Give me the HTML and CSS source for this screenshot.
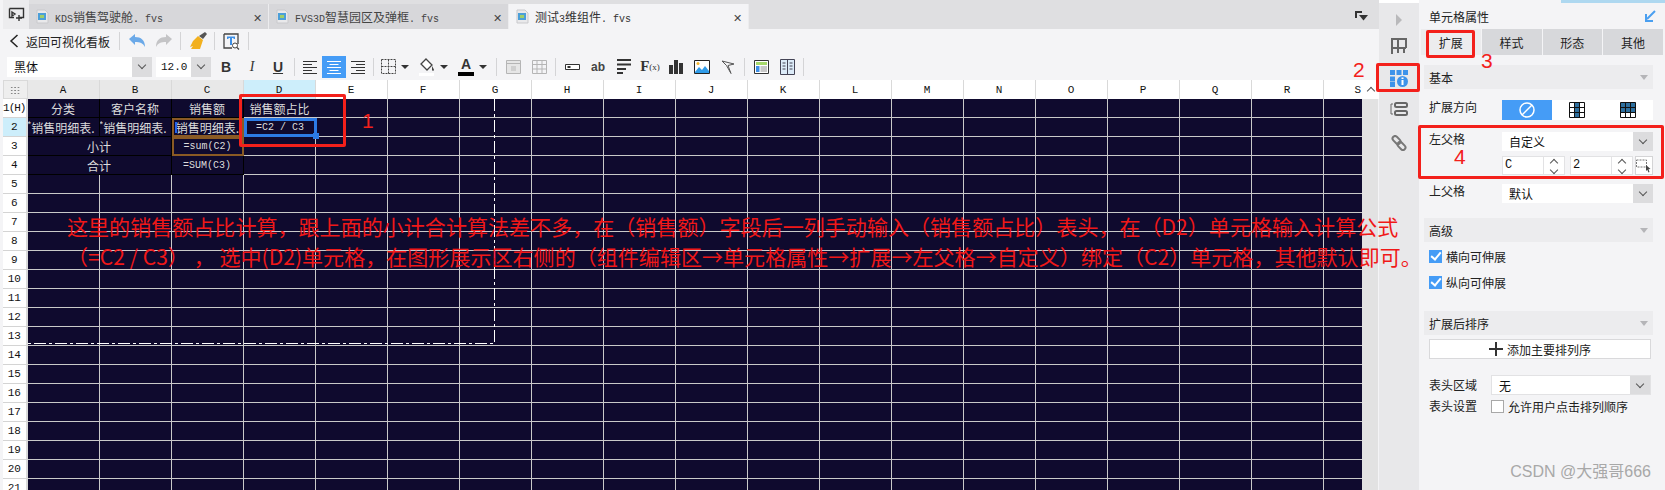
FILE: index.html
```html
<!DOCTYPE html>
<html lang="zh-CN">
  <head>
    <meta charset="UTF-8" />
    <title>测试3维组件.fvs</title>
    <link rel="stylesheet" href="styles.css">
  </head>
  <body>
    <div class="app">
      <div class="main">
        <div class="tabbar">
          <div class="tab-home">
            <svg width="17" height="15" viewBox="0 0 17 15"><path d="M1.5 1.5h14v9h-4M6 10.5H1.5v-9" fill="none" stroke="#333" stroke-width="1.4"/><path d="M4 5l3 2-3 2zM11 8v6M8 11h6" fill="none" stroke="#333" stroke-width="1.4"/></svg>
          </div>
          <div class="tab">
            <svg class="file-icon" width="13" height="15" viewBox="0 0 13 15"><path d="M1 1h8l3 3v10H1z" fill="#e9e9eb" stroke="#c9c9cc"/><rect x="2" y="4" width="8" height="7" fill="#4b9fd8"/><rect x="4" y="6" width="4" height="3" fill="#9fce6a"/></svg>
            <span class="tab-name"><span class="lat">KDS</span>销售驾驶舱<span class="lat">. fvs</span></span>
            <span class="tab-close">✕</span>
          </div>
          <div class="tab">
            <svg class="file-icon" width="13" height="15" viewBox="0 0 13 15"><path d="M1 1h8l3 3v10H1z" fill="#e9e9eb" stroke="#c9c9cc"/><rect x="2" y="4" width="8" height="7" fill="#4b9fd8"/><rect x="4" y="6" width="4" height="3" fill="#9fce6a"/></svg>
            <span class="tab-name"><span class="lat">FVS3D</span>智慧园区及弹框<span class="lat">. fvs</span></span>
            <span class="tab-close">✕</span>
          </div>
          <div class="tab active">
            <svg class="file-icon" width="13" height="15" viewBox="0 0 13 15"><path d="M1 1h8l3 3v10H1z" fill="#e9e9eb" stroke="#c9c9cc"/><rect x="2" y="4" width="8" height="7" fill="#4b9fd8"/><rect x="4" y="6" width="4" height="3" fill="#9fce6a"/></svg>
            <span class="tab-name">测试<span class="lat">3</span>维组件<span class="lat">. fvs</span></span>
            <span class="tab-close">✕</span>
          </div>
          <div class="tab-menu">
            <svg width="14" height="10" viewBox="0 0 14 10"><path d="M0 0h7v2H2v5H0z" fill="#333"/><path d="M4 4h9L8.500 9.500z" fill="#333"/></svg>
          </div>
        </div>

        <div class="toolbar toolbar-top">
          <svg class="back-icon" width="10" height="14" viewBox="0 0 10 14"><path d="M8.500 1L2 7l6.500 6" fill="none" stroke="#222" stroke-width="1.500"/></svg>
          <span class="back-text">返回可视化看板</span>
          <span class="sep"></span>
          <span class="tool">
            <svg width="18" height="16" viewBox="0 0 18 16"><path d="M1 6l6-5v3c6 0 10 3 10 10-2-4-5-5-10-5v3z" fill="#6ba9e8"/></svg>
          </span>
          <span class="tool">
            <svg width="18" height="16" viewBox="0 0 18 16"><path d="M17 6l-6-5v3C5 4 1 7 1 14c2-4 5-5 10-5v3z" fill="#c4c4c6"/></svg>
          </span>
          <span class="sep"></span>
          <span class="tool">
            <svg width="18" height="18" viewBox="0 0 18 18"><path d="M9 4l5 4-3 9H2l2-3-3 1 3-6z" fill="#f2b01e"/><path d="M10 4l6-4 2 2-4 5z" fill="#555"/></svg>
          </span>
          <span class="sep"></span>
          <span class="tool">
            <svg width="17" height="17" viewBox="0 0 17 17"><path d="M1 1h14v10M9 15H1V1" fill="none" stroke="#444" stroke-width="1.300"/><path d="M4 3.500h8v2.500h-1.500v-1H9v7H7V5H5.500v1H4z" fill="#3d8fe6"/><circle cx="12" cy="12.500" r="2.500" fill="#fff" stroke="#444"/><path d="M14 14.500l2 2" stroke="#444" stroke-width="1.300"/></svg>
          </span>
          <span class="sep"></span>
        </div>

        <div class="toolbar toolbar-format">
          <div class="select select-font"><span class="select-value">黑体</span><span class="select-arrow"><i class="chevron"></i></span></div>
          <div class="select select-size"><span class="select-value mono">12.0</span><span class="select-arrow"><i class="chevron"></i></span></div>
          <span class="tool letter bold">B</span>
          <span class="tool letter italic">I</span>
          <span class="tool letter under">U</span>
          <span class="sep"></span>
          <span class="tool align">
            <svg width="14" height="14" viewBox="0 0 14 14"><path d="M0 1.500h14M0 4.500h9M0 7.500h14M0 10.500h9M0 13.500h14" stroke="#333"/></svg>
          </span>
          <span class="tool align on">
            <svg width="14" height="14" viewBox="0 0 14 14"><path d="M0 1.500h14M2.500 4.500h9M0 7.500h14M2.500 10.500h9M0 13.500h14" stroke="#fff"/></svg>
          </span>
          <span class="tool align">
            <svg width="14" height="14" viewBox="0 0 14 14"><path d="M0 1.500h14M5 4.500h9M0 7.500h14M5 10.500h9M0 13.500h14" stroke="#333"/></svg>
          </span>
          <span class="sep"></span>
          <span class="tool short">
            <svg width="15" height="15" viewBox="0 0 15 15"><path d="M.5.500h14v14H.5zM7.500.500v14M.5 7.500h14" fill="none" stroke="#444" stroke-dasharray="2 1"/></svg>
          </span>
          <span class="caret"></span>
          <span class="tool short gap-left">
            <svg width="16" height="18" viewBox="0 0 16 18"><path d="M7 1l6 6-5 5-6-6z" fill="#fff" stroke="#444" stroke-width="1.300"/><path d="M13 8c1 2 2 3 2 4s-2 1-2 0 0-2 0-4z" fill="#444"/><rect y="15" width="15" height="3" fill="#fff"/></svg>
          </span>
          <span class="caret"></span>
          <span class="tool short gap-left">
            <svg width="16" height="18" viewBox="0 0 16 18"><rect y="14" width="16" height="4" fill="#000"/></svg>
            <b class="font-a">A</b>
          </span>
          <span class="caret"></span>
          <span class="sep sep-wide"></span>
          <span class="tool">
            <svg width="15" height="14" viewBox="0 0 15 14"><path d="M.5.500h14v13H.5zM.5 3.500h14" fill="#e6e6e6" stroke="#b5b5b5"/><rect x="5" y="6" width="5" height="5" fill="#cfcfcf"/></svg>
          </span>
          <span class="tool">
            <svg width="15" height="14" viewBox="0 0 15 14"><path d="M.5.500h14v13H.5zM.5 4.500h14M.5 9h14M5 .5v13M10 .5v13" fill="none" stroke="#b5b5b5"/></svg>
          </span>
          <span class="sep"></span>
          <span class="tool">
            <svg width="15" height="6" viewBox="0 0 15 6"><path d="M.5.500h14v5H.5z" fill="#fff" stroke="#333"/><rect x="2.500" y="2" width="3" height="2" fill="#333"/></svg>
          </span>
          <span class="tool ab">ab</span>
          <span class="tool">
            <svg width="14" height="15" viewBox="0 0 14 15"><path d="M0 1h14M0 5.500h14M0 10h9M0 14h6" stroke="#333" stroke-width="2"/></svg>
          </span>
          <span class="tool fx">F<small>(x)</small></span>
          <span class="tool">
            <svg width="14" height="14" viewBox="0 0 14 14"><path d="M0 5h4v9H0zM5 0h4v14H5zM10 3h4v11h-4z" fill="#333"/></svg>
          </span>
          <span class="tool">
            <svg width="16" height="14" viewBox="0 0 16 14"><path d="M.5.500h15v13H.5z" fill="#fff" stroke="#222"/><path d="M1 12l4-5 3 3 3-4 4 5v2H1z" fill="#2f9be8"/><circle cx="4" cy="3.500" r="1.500" fill="#f5b62f"/></svg>
          </span>
          <span class="tool">
            <svg width="14" height="14" viewBox="0 0 14 14"><path d="M1 1l12 3-6 1.500 3 8L5.500 5.500z" fill="none" stroke="#555"/></svg>
          </span>
          <span class="sep"></span>
          <span class="tool">
            <svg width="15" height="14" viewBox="0 0 15 14"><path d="M.5.500h14v13H.5z" fill="#fff" stroke="#333"/><rect x="2" y="2" width="11" height="3" fill="#a6d86a"/><rect x="2" y="6" width="3.500" height="6" fill="#3d8fe6"/><rect x="6.500" y="6" width="6.500" height="6" fill="#c8c8c8"/></svg>
          </span>
          <span class="tool">
            <svg width="15" height="16" viewBox="0 0 15 16"><path d="M.5.500h14v15H.5z" fill="#dcebf8" stroke="#445"/><path d="M7.500.5v15M2.500 4h3M2.500 7h3M2.500 10h3M9.500 4h3M9.500 7h3M9.500 10h3" stroke="#445"/></svg>
          </span>
          <span class="sep"></span>
        </div>

        <div class="sheet">
          <div class="col-heads">
            <span class="corner"><i class="dots"></i></span>
            <span class="col-head used">A</span>
            <span class="col-head used">B</span>
            <span class="col-head used">C</span>
            <span class="col-head current">D</span>
            <span class="col-head">E</span>
            <span class="col-head">F</span>
            <span class="col-head">G</span>
            <span class="col-head">H</span>
            <span class="col-head">I</span>
            <span class="col-head">J</span>
            <span class="col-head">K</span>
            <span class="col-head">L</span>
            <span class="col-head">M</span>
            <span class="col-head">N</span>
            <span class="col-head">O</span>
            <span class="col-head">P</span>
            <span class="col-head">Q</span>
            <span class="col-head">R</span>
            <span class="col-head last">S</span>
            <span class="scroll-up"><i class="chevron up"></i></span>
          </div>
          <div class="sheet-body">
            <div class="row-heads">
              <span class="row-head head-h">1(H)</span>
              <span class="row-head current">2</span>
              <span class="row-head">3</span>
              <span class="row-head">4</span>
              <span class="row-head">5</span>
              <span class="row-head">6</span>
              <span class="row-head">7</span>
              <span class="row-head">8</span>
              <span class="row-head">9</span>
              <span class="row-head">10</span>
              <span class="row-head">11</span>
              <span class="row-head">12</span>
              <span class="row-head">13</span>
              <span class="row-head">14</span>
              <span class="row-head">15</span>
              <span class="row-head">16</span>
              <span class="row-head">17</span>
              <span class="row-head">18</span>
              <span class="row-head">19</span>
              <span class="row-head">20</span>
              <span class="row-head">21</span>
            </div>
            <div class="cells">
              <div class="cell filled">分类</div>
              <div class="cell filled">客户名称</div>
              <div class="cell filled">销售额</div>
              <div class="cell head-d">销售额占比</div>
              <div class="cell filled"><i class="star">*</i>销售明细表.</div>
              <div class="cell filled"><i class="star">*</i>销售明细表.</div>
              <div class="cell filled brown"><i class="down-mark"></i>销售明细表.</div>
              <div class="cell selected formula">=C2 / C3<i class="handle"></i></div>
              <div class="cell filled span-2">小计</div>
              <div class="cell filled brown formula">=sum(C2)</div>
              <div class="cell"></div>
              <div class="cell filled span-2">合计</div>
              <div class="cell filled formula">=SUM(C3)</div>
            </div>
            <svg class="page-break" width="468" height="245" viewBox="0 0 468 245"><path d="M466.500 0v244.500H0" fill="none" stroke="#fff" stroke-dasharray="12 3 3 3"/></svg>
          </div>
          <div class="scrollbar"></div>
        </div>
      </div>

      <div class="sidebar">
        <svg class="side-icon first" width="8" height="12" viewBox="0 0 8 12"><path d="M1 0l6 6-6 6z" fill="#b9b9bb"/></svg>
        <svg class="side-icon" width="18" height="17" viewBox="0 0 18 17"><path d="M1 1h16M2 1v15M2 10h14M8 1v9M16 1v9M8 10v5M14 10v5" fill="none" stroke="#666" stroke-width="2"/></svg>
        <svg class="side-icon" width="18" height="17" viewBox="0 0 18 17"><path d="M0 0h5v5H0zM6.500 0h5v5h-5zM13 0h5v5h-5zM0 6.500h5v5H0zM0 12h5v5H0z" fill="#3d93ea"/><circle cx="12.500" cy="11.500" r="5.500" fill="#3d93ea"/><path d="M11.500 10h2v5h-2zM11.500 7.500h2v1.500h-2z" fill="#fff"/></svg>
        <svg class="side-icon tall-gap" width="18" height="14" viewBox="0 0 18 14"><path d="M3 2H1v10h2" fill="none" stroke="#666"/><rect x="5" y="1" width="12" height="4" rx="1.500" fill="none" stroke="#666" stroke-width="2"/><rect x="5" y="9" width="12" height="4" rx="1.500" fill="none" stroke="#666" stroke-width="2"/></svg>
        <svg class="side-icon" width="16" height="16" viewBox="0 0 16 16"><rect x="1" y="2.500" width="9" height="5" rx="2.500" transform="rotate(45 5.500 5)" fill="none" stroke="#777" stroke-width="2"/><rect x="6" y="8.500" width="9" height="5" rx="2.500" transform="rotate(45 10.500 11)" fill="none" stroke="#777" stroke-width="2"/></svg>
      </div>

      <div class="panel">
        <div class="panel-title">
          <span>单元格属性</span>
          <svg width="12" height="12" viewBox="0 0 12 12"><path d="M11 1L3 9M2 4v7h7" fill="none" stroke="#4a9ff0" stroke-width="2"/></svg>
        </div>
        <div class="panel-tabs">
          <span class="panel-tab active">扩展</span>
          <span class="panel-tab">样式</span>
          <span class="panel-tab">形态</span>
          <span class="panel-tab">其他</span>
        </div>

        <div class="section">基本<i class="section-arrow"></i></div>
        <div class="form-row dir-row">
          <label class="form-label">扩展方向</label>
          <div class="dir-group">
            <span class="dir on">
              <svg width="16" height="16" viewBox="0 0 16 16"><circle cx="8" cy="8" r="7" fill="none" stroke="#fff" stroke-width="1.500"/><path d="M3 13L13 3" stroke="#fff" stroke-width="1.500"/></svg>
            </span>
            <span class="dir">
              <svg width="16" height="16" viewBox="0 0 16 16"><rect x="5.500" y=".5" width="5" height="15" fill="#2d6f9e"/><path d="M.5.500h15v15H.5zM5.500.5v15M10.500.5v15M.5 5.500h15M.5 10.500h15" fill="none" stroke="#111"/></svg>
            </span>
            <span class="dir">
              <svg width="16" height="16" viewBox="0 0 16 16"><rect x=".5" y="5.500" width="15" height="5" fill="#2d6f9e"/><rect x=".5" y=".5" width="15" height="5" fill="#2d6f9e"/><path d="M.5.500h15v15H.5zM5.500.5v15M10.500.5v15M.5 5.500h15M.5 10.500h15" fill="none" stroke="#111"/></svg>
            </span>
          </div>
        </div>
        <div class="form-row parent-row">
          <label class="form-label">左父格</label>
          <div class="parent-fields">
            <div class="select select-panel"><span class="select-value">自定义</span><span class="select-arrow"><i class="chevron"></i></span></div>
            <div class="spin-row">
              <div class="spin"><span class="spin-value">C</span><span class="spin-btns"><i class="chevron up"></i><i class="chevron"></i></span></div>
              <div class="spin"><span class="spin-value">2</span><span class="spin-btns"><i class="chevron up"></i><i class="chevron"></i></span></div>
              <span class="pick">
                <svg width="16" height="14" viewBox="0 0 16 14"><path d="M.5 1h10v7H.5z" fill="none" stroke="#777" stroke-dasharray="2 1"/><path d="M10 6l4.500 4-2 .3 1 2.700-1 .4-1.200-2.700-1.300 1.300z" fill="#444"/></svg>
              </span>
            </div>
          </div>
        </div>
        <div class="form-row upper-row">
          <label class="form-label">上父格</label>
          <div class="select select-panel"><span class="select-value">默认</span><span class="select-arrow"><i class="chevron"></i></span></div>
        </div>

        <div class="section section-adv">高级<i class="section-arrow"></i></div>
        <div class="check-row first-check"><i class="check on"></i>横向可伸展</div>
        <div class="check-row"><i class="check on"></i>纵向可伸展</div>

        <div class="section section-sort">扩展后排序<i class="section-arrow"></i></div>
        <div class="add-sort"><b class="plus"></b>添加主要排列序</div>
        <div class="form-row header-area">
          <label class="form-label">表头区域</label>
          <div class="select select-header"><span class="select-value">无</span><span class="select-arrow"><i class="chevron"></i></span></div>
        </div>
        <div class="form-row header-set">
          <label class="form-label">表头设置</label>
          <div class="check-inline"><i class="check"></i>允许用户点击排列顺序</div>
        </div>
      </div>
    </div>

    <div class="mark box-1"></div>
    <div class="mark box-2"></div>
    <div class="mark box-3"></div>
    <div class="mark box-4"></div>
    <span class="num num-1">1</span>
    <span class="num num-2">2</span>
    <span class="num num-3">3</span>
    <span class="num num-4">4</span>
    <div class="note">
      <div>这里的销售额占比计算，跟上面的小计合计算法差不多，在（销售额）字段后一列手动输入（销售额占比）表头，在（D2）单元格输入计算公式</div>
      <div class="note-second">（=C2 / C3）&nbsp;，&nbsp;选中(D2)单元格，在图形展示区右侧的（组件编辑区→单元格属性→扩展→左父格→自定义）绑定（C2）单元格，其他默认即可。</div>
    </div>
    <div class="topline"></div>
    <div class="watermark">CSDN @大强哥666</div>
  </body>
</html>
```

FILE: styles.css
```css
* {
  box-sizing: border-box;
}
body {
  margin: 0;
  width: 1665px;
  height: 490px;
  overflow: hidden;
  position: relative;
  font-family: "Noto Sans CJK SC", sans-serif;
  font-size: 12px;
  color: #222;
  background: #fff;
}
i {
  font-style: normal;
}
.app {
  display: flex;
  height: 490px;
}
.main {
  width: 1379px;
  padding-left: 3px;
  display: flex;
  flex-direction: column;
  background: #f4f4f6;
}

/* tabs */
.tabbar {
  display: flex;
  height: 29px;
  padding-top: 4px;
  background: #dfdfe1;
  position: relative;
}
.tab-home {
  width: 26px;
  margin-top: -4px;
  display: flex;
  align-items: center;
  justify-content: center;
  background: #ececee;
}
.tab {
  width: 240px;
  display: flex;
  align-items: center;
  padding: 0 6px 0 7px;
  background: #d7d7da;
  border-right: 1px solid #ececee;
  color: #444;
}
.tab.active {
  background: #f4f4f6;
  color: #333;
}
.file-icon {
  flex: none;
}
.tab-name {
  margin-left: 6px;
  flex: 1;
}
.lat {
  font-family: "Liberation Mono", monospace;
  font-size: 10px;
}
.tab-close {
  font-size: 11px;
  color: #444;
}
.tab-menu {
  margin-left: auto;
  margin-right: 10px;
  margin-top: 3px;
}

/* toolbars */
.toolbar {
  display: flex;
  align-items: center;
}
.toolbar-top {
  height: 24px;
  padding-left: 6px;
}
.toolbar-top .tool {
  width: 27px;
}
.toolbar-format {
  height: 27px;
  padding-left: 4px;
}
.back-icon {
  margin-right: 7px;
}
.back-text {
  width: 90px;
  font-size: 12px;
  color: #222;
}
.sep {
  width: 1px;
  height: 18px;
  margin: 0 3px;
  background: #d4d4d6;
}
.sep-wide {
  margin-left: 7px;
}
.tool {
  width: 26px;
  height: 22px;
  display: flex;
  align-items: center;
  justify-content: center;
  position: relative;
}
.tool.align {
  width: 24px;
}
.tool.short {
  width: 22px;
}
.tool.on {
  background: #459cf6;
}
.gap-left {
  margin-left: 5px;
}
.letter {
  font-family: "Liberation Sans", sans-serif;
  font-size: 14px;
  color: #333;
}
.bold {
  font-weight: bold;
}
.italic {
  font-style: italic;
  font-family: "Liberation Serif", serif;
}
.under {
  font-weight: bold;
  text-decoration: underline;
}
.caret {
  width: 12px;
  display: flex;
  justify-content: center;
}
.caret::after {
  content: "";
  border-left: 4px solid transparent;
  border-right: 4px solid transparent;
  border-top: 4px solid #333;
}
.font-a {
  position: absolute;
  top: 0;
  left: 0;
  right: 0;
  text-align: center;
  font-family: "Liberation Sans", sans-serif;
  font-size: 14px;
  line-height: 16px;
  color: #333;
}
.ab {
  font-family: "Liberation Sans", sans-serif;
  font-size: 12px;
  font-weight: bold;
  color: #444;
}
.fx {
  font-family: "Liberation Serif", serif;
  font-size: 15px;
  font-weight: bold;
  color: #333;
}
.fx small {
  font-size: 9px;
  font-weight: normal;
}

/* selects */
.select {
  display: flex;
  height: 20px;
  background: #fff;
  align-items: stretch;
}
.select-font {
  width: 145px;
}
.select-size {
  width: 55px;
  margin-left: 4px;
  margin-right: 2px;
}
.select-value {
  flex: 1;
  padding-left: 7px;
  line-height: 20px;
  color: #111;
  white-space: nowrap;
}
.mono {
  font-family: "Liberation Mono", monospace;
  font-size: 11px;
  padding-left: 5px;
}
.select-arrow {
  width: 20px;
  display: flex;
  align-items: center;
  justify-content: center;
  background: #dcdcde;
}
.chevron {
  width: 6px;
  height: 6px;
  margin-top: -3px;
  display: block;
  border-right: 1px solid #555;
  border-bottom: 1px solid #555;
  transform: rotate(45deg);
}
.chevron.up {
  margin-top: 3px;
  transform: rotate(225deg);
}

/* sheet */
.sheet {
  flex: 1;
  position: relative;
  overflow: hidden;
  font-family: "Liberation Mono", "Noto Sans CJK SC", monospace;
  font-size: 11px;
}
.col-heads {
  display: flex;
  height: 19px;
  background: #fff;
}
.corner {
  width: 24.5px;
  flex: none;
  display: flex;
  align-items: center;
  justify-content: center;
  background: #eeeeee;
  border: 1px solid #d9d9d9;
}
.dots {
  width: 10px;
  height: 8px;
  background-image: radial-gradient(#888 1px, transparent 1px);
  background-size: 3.400px 3px;
}
.col-head {
  width: 72px;
  flex: none;
  border-right: 1px solid #d9d9d9;
  text-align: center;
  line-height: 20px;
  color: #111;
  background: #fff;
}
.col-head.used {
  background: #e8e8e8;
}
.col-head.current {
  background: #cdeefb;
}
.col-head.last {
  width: 38.500px;
  text-align: right;
  padding-right: 1px;
  border-right: 0;
}
.scroll-up {
  width: 17px;
  flex: none;
  display: flex;
  align-items: center;
  justify-content: center;
  background: #fff;
}
.sheet-body {
  display: flex;
  position: relative;
}
.row-heads {
  width: 24.500px;
  height: 391px;
  overflow: hidden;
  flex: none;
  background: #fff;
}
.row-head {
  display: block;
  height: 19px;
  border-bottom: 1px solid #d4d4d4;
  border-right: 2px solid #d9d9d9;
  text-align: center;
  line-height: 19px;
  color: #111;
}
.row-head.current {
  background: #cdeefb;
}
.head-h {
  letter-spacing: -1px;
}
.cells {
  width: 1334.500px;
  height: 391px;
  display: grid;
  grid-template-columns: repeat(4, 72px);
  grid-auto-rows: 19px;
  background-color: #0f0a2e;
  background-image:
    linear-gradient(to right, transparent 71px, #c9c9c9 71px),
    linear-gradient(to bottom, transparent 18px, #c9c9c9 18px);
  background-size: 72px 19px;
}
.cell {
  display: flex;
  align-items: center;
  justify-content: center;
  position: relative;
  font-family: "Noto Sans CJK SC", sans-serif;
  font-size: 12px;
  color: #dcdcdc;
  white-space: nowrap;
  overflow: hidden;
}
.filled {
  background: #0f0a2e;
  border-right: 1px solid #000;
  border-bottom: 1px solid #000;
}
.head-d {
  background: #0f0a2e;
  border-bottom: 1px solid #c9c9c9;
}
.span-2 {
  grid-column: span 2;
}
.star {
  position: absolute;
  left: 0;
  top: 1px;
  font-family: "Liberation Sans", sans-serif;
  font-size: 9px;
  line-height: 10px;
}
.brown {
  border: 2px solid #8a5a24;
}
.down-mark {
  position: absolute;
  left: 1px;
  top: 2px;
  width: 2px;
  height: 11px;
  background: #2563eb;
}
.selected {
  border: 3px solid #2c7be5;
  overflow: visible;
  z-index: 1;
  margin-right: -1px;
}
.formula {
  font-family: "Liberation Mono", monospace;
  font-size: 10px;
}
.handle {
  position: absolute;
  right: -5px;
  bottom: -5px;
  width: 6px;
  height: 6px;
  background: #2c7be5;
}
.page-break {
  position: absolute;
  left: 24.500px;
  top: 0;
}
.scrollbar {
  position: absolute;
  top: 19px;
  right: 0;
  bottom: 0;
  width: 17px;
  background: #e2e2e2;
  border-right: 1px solid #f4f4f6;
}

/* side icons */
.sidebar {
  width: 40px;
  padding-top: 11px;
  display: flex;
  flex-direction: column;
  align-items: center;
  background: #e8e8ea;
  border-top: 3px solid #fff;
}
.side-icon {
  flex: none;
  margin-bottom: 15px;
}
.side-icon.first {
  margin-bottom: 12px;
}
.side-icon.tall-gap {
  margin-bottom: 19px;
}

/* right panel */
.panel {
  width: 246px;
  padding: 3px 2px 0 5px;
  background: #f4f4f6;
}
.panel-title {
  height: 26px;
  display: flex;
  align-items: center;
  justify-content: space-between;
  padding: 0 7px 0 5px;
  color: #222;
}
.panel-tabs {
  display: flex;
  gap: 1px;
  height: 26px;
  margin: 0 0 10px -3px;
}
.panel-tab {
  flex: 1;
  display: flex;
  align-items: center;
  justify-content: center;
  background: #d7d8db;
  color: #222;
}
.panel-tab.active {
  background: #ececee;
}
.section {
  height: 24px;
  margin-right: 10px;
  padding-left: 5px;
  display: flex;
  align-items: center;
  justify-content: space-between;
  background: #ececee;
  color: #222;
}
.section-arrow {
  margin-right: 5px;
  border-left: 4px solid transparent;
  border-right: 4px solid transparent;
  border-top: 5px solid #b5b5b8;
}
.form-row {
  display: flex;
  margin-right: 10px;
  padding-left: 5px;
}
.form-label {
  width: 73px;
  flex: none;
  line-height: 14px;
  color: #222;
}
.dir-row {
  margin-top: 11px;
  height: 20px;
}
.dir-group {
  flex: 1;
  display: flex;
  background: #fff;
}
.dir {
  flex: 1;
  display: flex;
  align-items: center;
  justify-content: center;
}
.dir.on {
  background: #459cf6;
}
.parent-row {
  margin-top: 12px;
}
.parent-fields {
  flex: 1;
  min-width: 0;
}
.select-panel {
  flex: 1;
  height: 19px;
}
.select-panel .select-value {
  line-height: 19px;
}
.spin-row {
  display: flex;
  margin-top: 5px;
  height: 19px;
}
.spin {
  width: 63px;
  margin-right: 5px;
  display: flex;
  background: #fff;
  border: 1px solid #e2e2e4;
}
.spin + .spin {
  margin-right: 2px;
}
.spin-value {
  flex: 1;
  padding-left: 2px;
  font-family: "Liberation Mono", monospace;
  line-height: 17px;
  color: #111;
}
.spin-btns {
  width: 21px;
  display: flex;
  flex-direction: column;
  align-items: center;
  justify-content: space-around;
  border-left: 1px solid #e2e2e4;
}
.spin-btns .chevron {
  margin-top: -2px;
}
.spin-btns .chevron.up {
  margin-top: 2px;
}
.pick {
  flex: 1;
  display: flex;
  align-items: center;
  justify-content: center;
  background: #fff;
  border: 1px solid #d4d4d6;
}
.upper-row {
  margin-top: 9px;
}
.section-adv {
  margin-top: 15px;
}
.check-row {
  display: flex;
  align-items: center;
  height: 18px;
  margin: 8px 0 7px 5px;
  color: #222;
}
.first-check {
  margin-top: 5px;
}
.check {
  width: 13px;
  height: 13px;
  margin-right: 4px;
  display: flex;
  align-items: center;
  justify-content: center;
  background: #fff;
  border: 1px solid #a8a8a8;
}
.check.on {
  background: #459cf6;
  border-color: #459cf6;
}
.check.on::after {
  content: "";
  width: 4px;
  height: 8px;
  margin-top: -2px;
  border-right: 2px solid #fff;
  border-bottom: 2px solid #fff;
  transform: rotate(40deg);
}
.section-sort {
  margin-top: 20px;
}
.add-sort {
  height: 20px;
  margin: 4px 12px 0 5px;
  display: flex;
  align-items: center;
  justify-content: center;
  background: #fff;
  border: 1px solid #d9d9db;
  color: #222;
}
.plus {
  width: 14px;
  height: 14px;
  margin-right: 4px;
  background:
    linear-gradient(#333, #333) center / 14px 2px no-repeat,
    linear-gradient(#333, #333) center / 2px 14px no-repeat;
}
.header-area {
  margin-top: 16px;
  margin-right: 12px;
}
.header-area .form-label,
.header-set .form-label {
  width: 62px;
  line-height: 20px;
}
.select-header {
  flex: 1;
  border: 1px solid #e2e2e4;
}
.header-set {
  margin-top: 1px;
}
.check-inline {
  display: flex;
  align-items: center;
  color: #222;
}

/* red marks drawn over the screenshot */
.mark {
  position: absolute;
  border: 3px solid #f3201b;
  border-radius: 2px;
  z-index: 5;
}
.box-1 {
  left: 239px;
  top: 94px;
  width: 107px;
  height: 53px;
}
.box-2 {
  left: 1376px;
  top: 63px;
  width: 44px;
  height: 29px;
}
.box-3 {
  left: 1426px;
  top: 30px;
  width: 49px;
  height: 28px;
}
.box-4 {
  left: 1418px;
  top: 125px;
  width: 246px;
  height: 54px;
}
.num {
  position: absolute;
  z-index: 5;
  font-family: "Liberation Sans", sans-serif;
  font-size: 21px;
  line-height: 24px;
  color: #f3201b;
}
.num-1 {
  left: 362px;
  top: 109px;
}
.num-2 {
  left: 1353px;
  top: 58px;
}
.num-3 {
  left: 1481px;
  top: 49px;
}
.num-4 {
  left: 1454px;
  top: 145px;
}
.note {
  position: absolute;
  z-index: 4;
  left: 67px;
  top: 211px;
  font-size: 21px;
  line-height: 30px;
  letter-spacing: .05px;
  color: #f01818;
  white-space: nowrap;
}
.topline {
  position: absolute;
  right: 0;
  top: 0;
  width: 104px;
  height: 3px;
  background: #aed8f0;
}
.watermark {
  position: absolute;
  z-index: 5;
  right: 14px;
  top: 461px;
  font-family: "Liberation Sans", "Noto Sans CJK SC", sans-serif;
  font-size: 16px;
  line-height: 22px;
  color: #a8a8a8;
}
```
